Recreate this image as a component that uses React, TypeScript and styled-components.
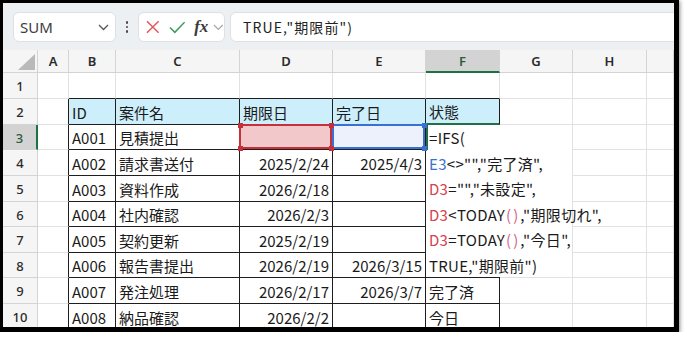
import React from 'react';
import styled, { createGlobalStyle } from 'styled-components';

const GRID = '#e1e1e1';
const HEAD_LINE = '#d4d4d4';
const INK = '#1e1e1e';
const GREEN = '#1e7145';
const JP = '"Noto Sans CJK JP", "Noto Sans", sans-serif';

const colLetters = ['A', 'B', 'C', 'D', 'E', 'F', 'G', 'H', ''];
const rowHeights = [23, 26, 26, 25, 26, 26, 25, 26, 25, 26, 26];

const tasks = [
    ['A001', '見積提出', '', ''],
    ['A002', '請求書送付', '2025/2/24', '2025/4/3'],
    ['A003', '資料作成', '2026/2/18', ''],
    ['A004', '社内確認', '2026/2/3', ''],
    ['A005', '契約更新', '2025/2/19', ''],
    ['A006', '報告書提出', '2026/2/19', '2026/3/15'],
    ['A007', '発注処理', '2026/2/17', '2026/3/7'],
    ['A008', '納品確認', '2026/2/2', ''],
];
const statusByRow: Record<number, string> = { 9: '完了済', 10: '今日' };

const GlobalStyle = createGlobalStyle`
  * { box-sizing: border-box; }
  body {
    margin: 0;
    background: #fff;
    font-family: ${JP};
  }
`;

const ChevronDown = ({ color = '#555' }: { color?: string }) => (
    <svg width="11" height="7" viewBox="0 0 11 7">
        <path d="M1 1 L5.5 5.5 L10 1" fill="none" stroke={color} strokeWidth="1.3" />
    </svg>
);

const App = () => {
    const cells: React.ReactNode[] = [];

    cells.push(
        <Corner key="corner">
            <svg width="35" height="23" viewBox="0 0 35 23">
                <polygon points="15,20 32,20 32,4" fill="#b9b9b9" />
            </svg>
        </Corner>
    );
    colLetters.forEach((l, i) => {
        cells.push(<ColHead key={'h' + i} $active={l === 'F'}>{l}</ColHead>);
    });

    for (let r = 1; r <= 10; r++) {
        cells.push(<RowHead key={'r' + r} $active={r === 3}>{r}</RowHead>);
        const task = r >= 3 ? tasks[r - 3] : null;
        const inTable = r >= 2;

        colLetters.forEach((l, c) => {
            const key = `${r}-${c}`;
            // F3:G8 sits under the cell editor
            if ((l === 'F' || l === 'G') && r >= 3 && r <= 8) return;

            if (l === 'A') {
                cells.push(<Cell key={key} $r={inTable ? INK : undefined} />);
                return;
            }
            if (['B', 'C', 'D', 'E', 'F'].includes(l)) {
                if (r === 1) {
                    cells.push(<Cell key={key} $b={INK} />);
                    return;
                }
                if (r === 2) {
                    const label = { B: 'ID', C: '案件名', D: '期限日', E: '完了日', F: '状態' }[l];
                    cells.push(
                        <Cell key={key} $r={INK} $b={l === 'F' ? GREEN : INK} $bw={l === 'F' ? 2 : 1} $bg="#cdeffc">
                            {label}
                        </Cell>
                    );
                    return;
                }
                let text = '';
                if (task) {
                    if (l === 'B') text = task[0];
                    if (l === 'C') text = task[1];
                    if (l === 'D') text = task[2];
                    if (l === 'E') text = task[3];
                }
                if (l === 'F') text = statusByRow[r] || '';
                const right = l === 'D' || l === 'E';
                cells.push(
                    <Cell key={key} $r={INK} $b={INK} $align={right ? 'right' : 'left'}>
                        {r === 3 && l === 'D' && (
                            <RefBox $c="#c6303a" $fill="#f3c8cb" $z={3}>
                                <Handle $c="#c6303a" $x="l" $y="t" />
                                <Handle $c="#c6303a" $x="r" $y="t" />
                                <Handle $c="#c6303a" $x="l" $y="b" />
                                <Handle $c="#c6303a" $x="r" $y="b" />
                            </RefBox>
                        )}
                        {r === 3 && l === 'E' && (
                            <RefBox $c="#3a6fd4" $fill="#edf1fb" $z={2}>
                                <Handle $c="#3a6fd4" $x="r" $y="t" />
                                <Handle $c="#3a6fd4" $x="r" $y="b" />
                            </RefBox>
                        )}
                        {text}
                    </Cell>
                );
                return;
            }
            cells.push(<Cell key={key} />);
        });
    }

    return (
        <>
            <GlobalStyle />
            <Frame>
                <Toolbar>
                    <NameBox>
                        <span>SUM</span>
                        <ChevronDown />
                    </NameBox>
                    <Dots>
                        <i /><i /><i />
                    </Dots>
                    <FuncBox>
                        <svg width="14" height="14" viewBox="0 0 14 14">
                            <path d="M1 1 L13 13 M13 1 L1 13" stroke="#e2555a" strokeWidth="1.5" />
                        </svg>
                        <svg width="17" height="13" viewBox="0 0 17 13">
                            <path d="M1 6.5 L6 11.5 L16 1" fill="none" stroke="#3f9a5e" strokeWidth="1.5" />
                        </svg>
                        <Fx>fx</Fx>
                        <ChevronDown color="#a8a8a8" />
                    </FuncBox>
                    <FormulaInput>TRUE,"期限前")</FormulaInput>
                </Toolbar>
                <Sheet>
                    {cells}
                    <Editor>
                        <Line>=IFS(</Line>
                        <Line><Blue>E3</Blue>&lt;&gt;"","完了済",</Line>
                        <Line><Red>D3</Red>="","未設定",</Line>
                        <Line><Red>D3</Red>&lt;TODAY<Paren>()</Paren>,"期限切れ",</Line>
                        <Line><Red>D3</Red>=TODAY<Paren>()</Paren>,"今日",</Line>
                        <Line>TRUE,"期限前")</Line>
                    </Editor>
                </Sheet>
            </Frame>
        </>
    );
};

export default App;

// Styled Components
const Frame = styled.div`
  width: 679px;
  height: 332px;
  border-style: solid;
  border-color: #000;
  border-width: 3px 5px 5px 3px;
  box-shadow: 1px 1px 4px rgba(0, 0, 0, 0.45);
  display: flex;
  flex-direction: column;
  overflow: hidden;
  background: #fff;
`;

const Toolbar = styled.div`
  height: 47px;
  flex: none;
  display: flex;
  align-items: flex-start;
  padding: 9px 0 0 10px;
  background: #edf0f3;
`;

const NameBox = styled.div`
  width: 103px;
  height: 30px;
  display: flex;
  align-items: center;
  justify-content: space-between;
  padding: 0 6px 0 6px;
  background: #fff;
  border: 1px solid #dde1e6;
  border-radius: 6px;
  font: 15px "Noto Sans", sans-serif;
  color: #3d3d3d;
`;

const Dots = styled.div`
  width: 22px;
  height: 30px;
  display: flex;
  flex-direction: column;
  align-items: center;
  justify-content: center;
  gap: 2px;

  i {
    width: 2.5px;
    height: 2.5px;
    border-radius: 50%;
    background: #4a4a4a;
  }
`;

const FuncBox = styled.div`
  width: 87px;
  height: 30px;
  display: flex;
  align-items: center;
  gap: 9px;
  padding: 0 0 0 7px;
  background: #fff;
  border: 1px solid #dde1e6;
  border-radius: 6px;
`;

const Fx = styled.span`
  font: italic bold 17px "Liberation Serif", serif;
  color: #3a3a3a;
  margin-right: -4px;
`;

const FormulaInput = styled.div`
  flex: 1;
  height: 30px;
  margin-left: 5px;
  margin-right: -12px;
  display: flex;
  align-items: center;
  padding: 0 12px;
  background: #fff;
  border: 1px solid #dde1e6;
  border-radius: 6px;
  font: 14px ${JP};
  letter-spacing: 1.1px;
  color: #222;
`;

const Sheet = styled.div`
  flex: 1;
  display: grid;
  grid-template-columns: 35px 31px 47px 124px 93px 93px 74px 73px 74px 1fr;
  grid-template-rows: ${rowHeights.map(h => h + 'px').join(' ')};
  overflow: hidden;
`;

const Corner = styled.div`
  background: #f5f5f5;
  border-right: 1px solid ${HEAD_LINE};
  border-bottom: 1px solid ${HEAD_LINE};
  svg { display: block; }
`;

const ColHead = styled.div<{ $active?: boolean }>`
  display: flex;
  align-items: center;
  justify-content: center;
  background: ${p => (p.$active ? '#d3d3d3' : '#f5f5f5')};
  border-right: 1px solid ${HEAD_LINE};
  border-bottom: ${p => (p.$active ? `2px solid ${GREEN}` : `1px solid ${HEAD_LINE}`)};
  font: 600 13px "Noto Sans", sans-serif;
  color: ${p => (p.$active ? '#2a5c3d' : '#2b2b2b')};
`;

const RowHead = styled.div<{ $active?: boolean }>`
  display: flex;
  align-items: center;
  justify-content: center;
  padding-top: 1px;
  background: ${p => (p.$active ? '#d3d3d3' : '#f5f5f5')};
  border-right: ${p => (p.$active ? `2px solid ${GREEN}` : `1px solid ${HEAD_LINE}`)};
  border-bottom: 1px solid ${HEAD_LINE};
  font: 500 13px "Noto Sans", sans-serif;
  color: ${p => (p.$active ? '#2a5c3d' : '#2b2b2b')};
`;

const Cell = styled.div<{ $r?: string; $b?: string; $bw?: number; $bg?: string; $align?: 'left' | 'right' }>`
  position: relative;
  min-width: 0;
  display: flex;
  align-items: center;
  justify-content: ${p => (p.$align === 'right' ? 'flex-end' : 'flex-start')};
  padding: 1px 3px 0 3px;
  background: ${p => p.$bg || '#fff'};
  border-right: 1px solid ${p => p.$r || GRID};
  border-bottom: ${p => p.$bw || 1}px solid ${p => p.$b || GRID};
  font: 15px ${JP};
  color: #1a1a1a;
  white-space: nowrap;
`;

const RefBox = styled.div<{ $c: string; $fill: string; $z: number }>`
  position: absolute;
  inset: -1px 0 0 -1px;
  border: 2px solid ${p => p.$c};
  background: ${p => p.$fill};
  z-index: ${p => p.$z};
`;

const Handle = styled.span<{ $c: string; $x: 'l' | 'r'; $y: 't' | 'b' }>`
  position: absolute;
  width: 5px;
  height: 5px;
  background: ${p => p.$c};
  ${p => (p.$x === 'l' ? 'left: -3.5px;' : 'right: -3.5px;')}
  ${p => (p.$y === 't' ? 'top: -3.5px;' : 'bottom: -3.5px;')}
`;

const Editor = styled.div`
  grid-column: 7 / span 2;
  grid-row: 4 / span 6;
  position: relative;
  z-index: 1;
  padding-left: 3px;
  background: #fff;
  border-right: 1px solid ${GRID};
  border-bottom: 1px solid ${GRID};
  font: 15px ${JP};
  letter-spacing: 0.3px;
  color: #1a1a1a;
  white-space: pre;

  &::before {
    content: '';
    position: absolute;
    left: 0;
    top: 0;
    width: 2px;
    height: 25px;
    background: ${GREEN};
  }

  &::after {
    content: '';
    position: absolute;
    left: 0;
    bottom: -1px;
    width: 74px;
    height: 1px;
    background: ${INK};
  }
`;

const Line = styled.div`
  height: 25.5px;
  line-height: 26px;
`;

const Blue = styled.span`
  color: #3c72cf;
`;

const Red = styled.span`
  color: #d8404c;
`;

const Paren = styled.span`
  color: #d4668a;
  letter-spacing: 2px;
  margin-left: 1px;
`;
